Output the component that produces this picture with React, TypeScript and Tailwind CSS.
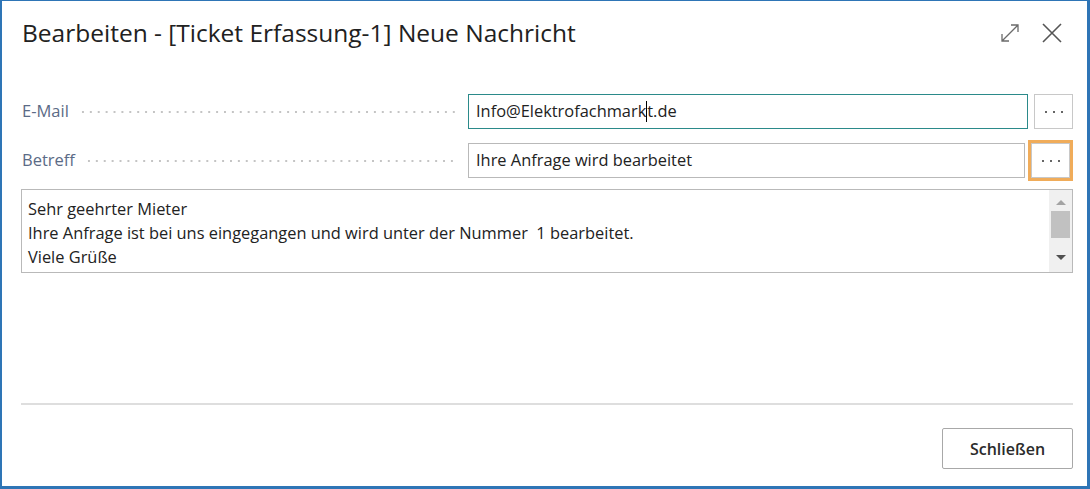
import React from 'react';

const font = { fontFamily: '"Open Sans", "Noto Sans", sans-serif' };

function Leader() {
  return (
    <span className="ml-[10px] mr-[13px] h-[4px] flex-1 bg-[radial-gradient(circle,#c4c4c4_0.9px,transparent_1.3px)] bg-size-[7.9px_4px] bg-repeat-x" />
  );
}

function DotsButton({ active }: { active?: boolean }) {
  return (
    <div className={active ? 'ml-[3px] border-[3px] border-[#f0ac5a] p-0' : 'ml-[6px] p-0'}>
      <button className="flex h-[35px] w-[39px] items-center justify-center gap-[6px] border border-[#c8c8c8] bg-white">
        <span className="h-[2px] w-[2px] rounded-full bg-[#333]" />
        <span className="h-[2px] w-[2px] rounded-full bg-[#333]" />
        <span className="h-[2px] w-[2px] rounded-full bg-[#333]" />
      </button>
    </div>
  );
}

export default function App() {
  return (
    <div
      className="flex h-[489px] w-[1090px] flex-col border-t border-r-[3px] border-b-[3px] border-l-2 border-[#2e75b6] bg-white text-[#222]"
      style={font}
    >
      <header className="flex h-[62px] items-start justify-between pt-[13px] pr-[24px] pl-[20px]">
        <h1 className="text-[24.5px] leading-[38px] text-[#212121]">
          Bearbeiten - [Ticket Erfassung-1] Neue Nachricht
        </h1>
        <div className="mt-[8px] flex items-center gap-[20px]">
          <svg width="22" height="22" viewBox="0 0 22 22" fill="none" stroke="#6b6b6b" strokeWidth="1.3">
            <path d="M3 19L19 3M12 3h7v7M3 12v7h7" />
          </svg>
          <svg width="22" height="22" viewBox="0 0 22 22" fill="none" stroke="#555" strokeWidth="1.6">
            <path d="M2 2L20 20M20 2L2 20" />
          </svg>
        </div>
      </header>

      <main className="flex flex-1 flex-col pr-[14px] pl-[19px]">
        <div className="mt-[31px] flex h-[35px] items-center">
          <div className="flex w-[447px] items-center pl-[1px]">
            <span className="text-[16.5px] text-[#5b6b86]">E-Mail</span>
            <Leader />
          </div>
          <div className="flex h-[35px] flex-1 items-center border border-[#2b8a8a] px-[7px] text-[16.4px]">
            Info@Elektrofachmark
            <span className="inline-block h-[21px] w-0 border-l border-black" />
            t.de
          </div>
          <DotsButton />
        </div>

        <div className="mt-[11px] flex h-[41px] items-center">
          <div className="flex w-[447px] items-center pl-[1px]">
            <span className="text-[16.5px] text-[#5b6b86]">Betreff</span>
            <Leader />
          </div>
          <div className="flex h-[35px] flex-1 items-center border border-[#b9b9b9] px-[7px] text-[16.4px]">
            Ihre Anfrage wird bearbeitet
          </div>
          <DotsButton active />
        </div>

        <div className="mt-[8px] flex h-[84px] border border-[#b9b9b9]">
          <div className="flex-1 px-[6px] pt-[7px] text-[16.4px] leading-[24px]">
            <p>Sehr geehrter Mieter</p>
            <p>Ihre Anfrage ist bei uns eingegangen und wird unter der Nummer&nbsp; 1 bearbeitet.</p>
            <p>Viele Grüße</p>
          </div>
          <div className="flex w-[23px] flex-col items-center bg-[#f0f0f0] pt-[10px]">
            <span className="h-0 w-0 border-x-[5px] border-b-[5px] border-x-transparent border-b-[#a3a3a3]" />
            <span className="mt-[6px] h-[27px] w-[19px] bg-[#c1c1c1]" />
            <span className="mt-[17px] h-0 w-0 border-x-[5px] border-t-[5px] border-x-transparent border-t-[#505050]" />
          </div>
        </div>

        <div className="mt-[130px] h-[2px] bg-[#dedede]" />

        <div className="mt-[23px] flex justify-end">
          <button className="h-[41px] w-[131px] rounded-[2px] border border-[#a8a8a8] bg-white text-[16px] font-semibold text-[#2b2b2b]">
            Schließen
          </button>
        </div>
      </main>
    </div>
  );
}
